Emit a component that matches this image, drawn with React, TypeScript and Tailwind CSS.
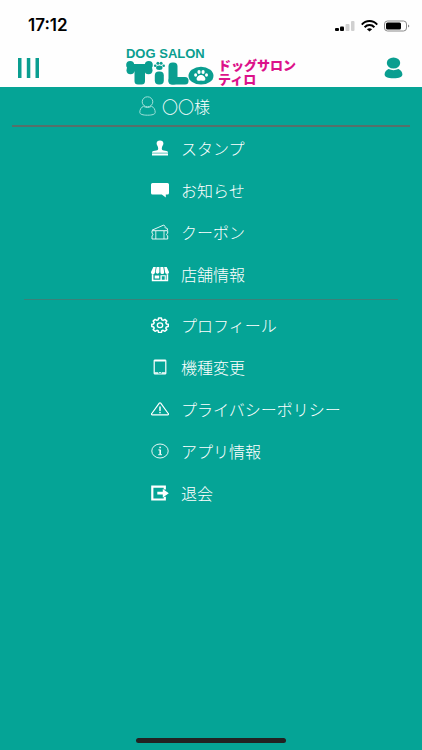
import type { ReactNode } from "react";

type MenuItem = {
  id: string;
  label: string;
  icon: ReactNode;
};

const iconProps = {
  width: 18,
  height: 16,
  viewBox: "0 0 18 16",
  fill: "none",
  stroke: "currentColor",
  strokeLinejoin: "round" as const,
  "aria-hidden": true,
};

function StampIcon() {
  return (
    <svg {...iconProps} fill="currentColor" stroke="none">
      <path d="M9 .5C6.800.5 5.600 1.800 5.600 3.500c0 1.800 1.600 2.800 1.600 5 0 1.300-.6 1.800-2 2L2.500 11C1.500 11.200 1 11.700 1 12.700h16c0-1-.5-1.500-1.500-1.700L12.800 10.500c-1.400-.2-2-.7-2-2 0-2.200 1.600-3.200 1.600-5C12.400 1.800 11.200.5 9 .5z" />
      <path d="M1 13.400h16v2.100H1z" />
    </svg>
  );
}

function NewsIcon() {
  return (
    <svg {...iconProps} fill="currentColor" stroke="none">
      <path d="M1.500 1h15A1.500 1.500 0 0 1 18 2.500v8.600a1.500 1.500 0 0 1-1.500 1.500h-1.700v2.900l-4-2.900H1.500A1.500 1.500 0 0 1 0 11.100V2.500A1.500 1.500 0 0 1 1.500 1z" />
    </svg>
  );
}

function CouponIcon() {
  return (
    <svg {...iconProps}>
      <path
        strokeWidth="0.9"
        d="M1 6.700h15.700v2.500c-1.500.4-1.500 2.200 0 2.600V15H1v-3.200c1.300-.4 1.300-2.200 0-2.600zM1 6.200 12.800 1l1.300 1.500c-.5 1.300.6 2 1.800 1.500l.8 2.200"
      />
      <path strokeWidth="0.8" d="M4.800 7v8M13 7v8" />
    </svg>
  );
}

function ShopIcon() {
  return (
    <svg {...iconProps} fill="currentColor" stroke="none">
      <path d="M2.300 1H4.800L4 6.300a1.800 1.800 0 0 1-4-.3zM5.600 1h2.800v5.200a1.900 1.900 0 0 1-3.700 0zM9.400 1h2.900l.9 5.200a1.900 1.900 0 0 1-3.800 0zM13.200 1h2.500L18 6a1.800 1.800 0 0 1-3.900.3z" />
      <path
        fillRule="evenodd"
        d="M.800 8.300h1.600v5.500h7V9.300h5.400v4.500h.8V8.300h1.600V15.300H.800zM10.800 10.300v3.500h2.900v-3.500z"
      />
      <path d="M3.700 9.500h4.500v3H3.700z" />
    </svg>
  );
}

function GearIcon() {
  return (
    <svg {...iconProps}>
      <path
        strokeWidth="1.500"
        d="M7.600 1h2.800l.4 1.900 1.300.5 1.800-1 1.900 1.700-1 1.600.6 1.200 1.900.3v2.300l-1.900.4-.6 1.200 1 1.500-1.900 1.700-1.800-1-1.300.5-.4 1.700H7.600l-.4-1.700-1.300-.5-1.800 1-1.900-1.700 1-1.500-.6-1.200L.8 9.500V7.200l1.800-.3.6-1.200-1-1.600 1.900-1.700 1.800 1 1.300-.5z"
      />
      <ellipse cx="9" cy="8.300" rx="2.700" ry="2.400" strokeWidth="1.300" />
    </svg>
  );
}

function DeviceIcon() {
  return (
    <svg {...iconProps}>
      <rect x="3.200" y="1" width="11.600" height="14" rx="0.800" strokeWidth="1.200" />
      <path strokeWidth="1.500" d="M3.500 1.700h11M3.500 14h3.800M10.700 14h3.800" />
      <path strokeWidth="1.200" d="M8.200 13.500h1.600" />
    </svg>
  );
}

function WarningIcon() {
  return (
    <svg {...iconProps}>
      <path
        strokeWidth="1.200"
        d="M8.300 2.200a.9.9 0 0 1 1.400 0l7.500 10.300a.8.8 0 0 1-.7 1.400h-15a.8.8 0 0 1-.7-1.400z"
      />
      <path strokeWidth="1.500" strokeLinecap="round" d="M9 6v3.400M9 11.600v.1" />
    </svg>
  );
}

function InfoIcon() {
  return (
    <svg {...iconProps}>
      <ellipse cx="9" cy="8" rx="8.200" ry="7" strokeWidth="0.900" />
      <path strokeWidth="1.500" d="M9.200 6.700v4.800M9.100 3.700v1.500" />
      <path strokeWidth="0.900" d="M7.300 6.900h2M7.200 11.700h3.800" />
    </svg>
  );
}

function ExitIcon() {
  return (
    <svg {...iconProps} strokeLinejoin="miter">
      <path strokeWidth="2.200" d="M13.800 4.500V1.700H1.300v12.800h12.500v-2.700" />
      <path
        fill="currentColor"
        stroke="none"
        d="M6.300 6.800h5.500V3.900L17.800 8.200l-6 4.300V9.600H6.300z"
      />
    </svg>
  );
}

const mainItems: MenuItem[] = [
  { id: "stamp", label: "スタンプ", icon: <StampIcon /> },
  { id: "news", label: "お知らせ", icon: <NewsIcon /> },
  { id: "coupon", label: "クーポン", icon: <CouponIcon /> },
  { id: "shop", label: "店舗情報", icon: <ShopIcon /> },
];

const settingItems: MenuItem[] = [
  { id: "profile", label: "プロフィール", icon: <GearIcon /> },
  { id: "device", label: "機種変更", icon: <DeviceIcon /> },
  { id: "privacy", label: "プライバシーポリシー", icon: <WarningIcon /> },
  { id: "about", label: "アプリ情報", icon: <InfoIcon /> },
  { id: "leave", label: "退会", icon: <ExitIcon /> },
];

function StatusBar() {
  return (
    <div className="flex h-12 items-center justify-between pt-1 pr-3 pl-7 text-black">
      <span className="font-['Inter',sans-serif] text-[17px] font-semibold">17:12</span>
      <div className="flex items-center gap-1.5">
        <svg width="20" height="12" viewBox="0 0 20 12" aria-hidden="true">
          <rect x="0" y="8" width="4" height="3" rx="1" />
          <rect x="5" y="6.500" width="4" height="4.500" rx="1" />
          <rect x="10.500" y="4" width="4" height="7" rx="1" fill="#d0d0d0" />
          <rect x="16" y="1" width="3.500" height="10" rx="1" fill="#d0d0d0" />
        </svg>
        <svg width="17" height="12" viewBox="0 0 17 12" fill="none" stroke="currentColor" strokeWidth="2" aria-hidden="true">
          <path d="M.8 4.600C5-.1 12-.1 16.200 4.600M3.600 7.200c2.800-2.900 7-2.900 9.800 0" />
          <path d="M8.500 11.500 5.900 9.200c1.500-1.400 3.700-1.400 5.200 0z" fill="currentColor" stroke="none" />
        </svg>
        <svg width="26" height="12" viewBox="0 0 26 12" aria-hidden="true">
          <rect x="0.500" y="1" width="22" height="10" rx="3" fill="none" stroke="#8a8a8a" />
          <rect x="2" y="2.500" width="15" height="7" rx="1.500" />
          <path d="M24 4.500c1.800.6 1.800 2.400 0 3z" fill="#8a8a8a" />
        </svg>
      </div>
    </div>
  );
}

function Logo() {
  return (
    <div className="flex items-end gap-1">
      <div className="flex flex-col pb-0.5">
        <span className="font-['Liberation_Sans',Arial,sans-serif] text-[13px] leading-3 font-bold whitespace-nowrap text-[#0a9e90]">
          DOG SALON
        </span>
        <svg width="88" height="25" viewBox="0 0 88 25" fill="#0a9e90" role="img" aria-label="TiLO">
          {/* bone */}
          <circle cx="4.200" cy="5" r="4" />
          <circle cx="4.500" cy="10.200" r="4" />
          <circle cx="22.800" cy="5" r="4" />
          <circle cx="22.500" cy="10.200" r="4" />
          <rect x="4" y="4" width="19" height="7.500" />
          <rect x="8.500" y="5" width="10.500" height="19.500" rx="3.500" />
          {/* paw over the stem */}
          <ellipse cx="33.300" cy="7.800" rx="3.200" ry="2.200" />
          <circle cx="29.200" cy="5.800" r="1.300" />
          <circle cx="31.900" cy="3.200" r="1.500" />
          <circle cx="35.100" cy="3.200" r="1.500" />
          <circle cx="37.700" cy="5.800" r="1.300" />
          <rect x="28.800" y="11.500" width="9" height="13" rx="4" />
          {/* L block */}
          <rect x="42.500" y="2.500" width="9" height="22" rx="4" />
          <rect x="42.500" y="17" width="20" height="7.500" rx="3.500" />
          {/* round block with a white paw */}
          <ellipse cx="75" cy="15.700" rx="12.500" ry="8.900" />
          <g fill="#fff">
            <path d="M75 14.900c2.200 0 4.400 2.200 4.400 4 0 1.900-2.500 2.200-4.400 1.500-1.900.7-4.400.4-4.400-1.500 0-1.800 2.200-4 4.400-4z" />
            <ellipse cx="69.600" cy="15" rx="1.500" ry="1.800" />
            <ellipse cx="73" cy="12" rx="1.600" ry="2" />
            <ellipse cx="77.100" cy="12" rx="1.600" ry="2" />
            <ellipse cx="80.500" cy="15" rx="1.500" ry="1.800" />
          </g>
        </svg>
      </div>
      <div className="flex flex-col font-['Liberation_Sans','Noto_Sans_CJK_JP',sans-serif] text-[13px] leading-[14px] font-black whitespace-nowrap text-[#dc128a]">
        <span>ドッグサロン</span>
        <span>ティロ</span>
      </div>
    </div>
  );
}

function Header() {
  return (
    <header className="grid h-[39px] grid-cols-[1fr_auto_1fr] items-center px-[18px] text-[#0a9e90]">
      <button type="button" aria-label="メニュー" className="justify-self-start">
        <svg width="22" height="20" viewBox="0 0 22 20" fill="currentColor" aria-hidden="true">
          <rect x="0" y="0" width="3.500" height="20" />
          <rect x="8.800" y="0" width="3.500" height="20" />
          <rect x="17.500" y="0" width="3.500" height="20" />
        </svg>
      </button>
      <Logo />
      <button type="button" aria-label="マイページ" className="justify-self-end">
        <svg width="20" height="22" viewBox="0 0 20 22" fill="currentColor" aria-hidden="true">
          <ellipse cx="9.500" cy="6" rx="6.700" ry="5.600" />
          <path d="M4.600 12c3 1.500 6.800 1.500 9.800 0 2.500 1.200 4 3.100 4 5.500 0 2.400-3 3.700-8.900 3.700S.6 19.900.6 17.500c0-2.400 1.500-4.300 4-5.500z" />
        </svg>
      </button>
    </header>
  );
}

function MenuList({ items }: { items: MenuItem[] }) {
  return (
    <ul>
      {items.map((item) => (
        <li key={item.id}>
          <button
            type="button"
            className="flex h-[42px] w-full items-center gap-3 pl-[151px] text-left whitespace-nowrap"
          >
            {item.icon}
            {item.label}
          </button>
        </li>
      ))}
    </ul>
  );
}

export default function App() {
  return (
    <div className="flex min-h-screen flex-col bg-[#05a496] font-['Noto_Sans_CJK_JP',sans-serif] text-base font-light text-white">
      <div className="bg-[#fefefe]">
        <StatusBar />
        <Header />
      </div>
      <main className="flex-1">
        <div className="mx-3 flex h-10 items-center gap-1.5 border-b-2 border-[#56706a] pl-[127px]">
          <svg width="17" height="20" viewBox="0 0 17 20" fill="none" stroke="#9fe0d8" strokeWidth="1" aria-hidden="true">
            <ellipse cx="8.500" cy="5.800" rx="5.300" ry="5" />
            <path d="M4.500 10.300C1.900 11.300.8 13.800.8 16.500c0 1.700 3 2.700 7.700 2.700s7.700-1 7.700-2.700c0-2.700-1.100-5.200-3.700-6.200-2.400 1.600-5.600 1.600-8 0z" />
          </svg>
          <span>〇〇様</span>
        </div>
        <nav aria-label="メインメニュー">
          <MenuList items={mainItems} />
          <hr className="mx-6 my-1 border-[#3b8179]" />
          <MenuList items={settingItems} />
        </nav>
      </main>
      <div className="mx-auto mb-[7px] h-[5px] w-[150px] rounded-full bg-[#222]" />
    </div>
  );
}
